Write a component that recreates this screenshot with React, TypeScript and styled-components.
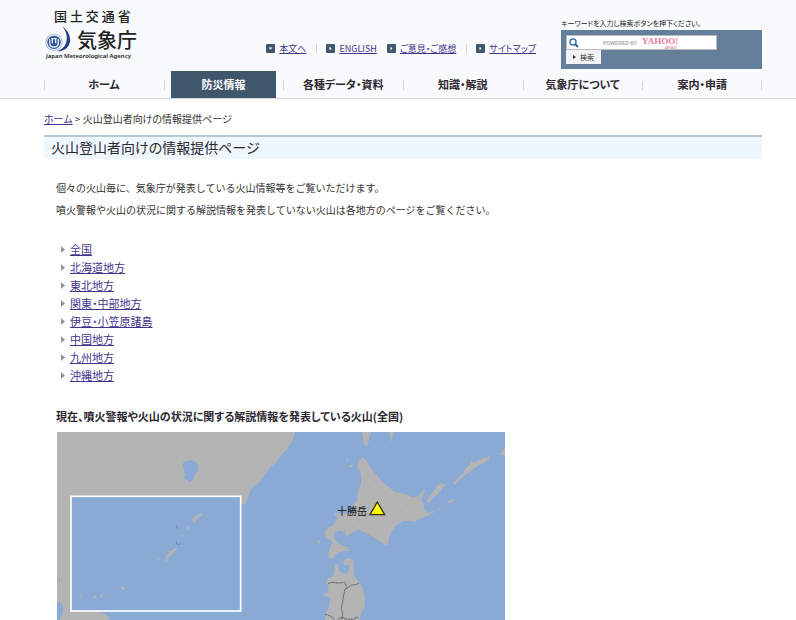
import React from "react";
import styled, { createGlobalStyle, css } from "styled-components";

const GlobalStyle = createGlobalStyle`
  body {
    margin: 0;
    background: #fff;
    color: #333;
    font-family: "Noto Sans CJK JP", "Liberation Sans", sans-serif;
    font-size: 11px;
    font-feature-settings: "palt";
  }
  * { box-sizing: border-box; }
  a { color: #43348c; }
`;

const Header = styled.header`
  background: #f8fafc;
  border-bottom: 1px solid #d6d8da;
  padding: 0 34px 0 44px;
`;

const TopRow = styled.div`
  display: flex;
  height: 71px;
`;

const Logo = styled.a`
  display: block;
  width: 96px;
  padding-top: 8px;
  color: #222;
  text-decoration: none;
`;

const Ministry = styled.div`
  padding-left: 10px;
  font-size: 13px;
  font-weight: 500;
  line-height: 16px;
  white-space: nowrap;
`;

const AgencyRow = styled.div`
  display: flex;
  align-items: flex-end;
  gap: 6px;
  height: 28px;
`;

const AgencyName = styled.div`
  font-size: 20px;
  font-weight: 500;
  line-height: 24px;
  white-space: nowrap;
`;

const AgencyEnglish = styled.div`
  padding-left: 2px;
  font-family: "Noto Sans", sans-serif;
  font-size: 6px;
  font-weight: 600;
  line-height: 8px;
  white-space: nowrap;
`;

const Links = styled.ul`
  display: flex;
  align-items: center;
  height: 16px;
  margin: 40px 25px 0 auto;
  padding: 0;
  list-style: none;
`;

const LinkItem = styled.li<{ $divided?: boolean }>`
  display: flex;
  align-items: center;
  gap: 4px;
  height: 9px;
  margin-left: 10px;
  font-size: 9px;
  white-space: nowrap;
  ${(p) =>
    p.$divided &&
    css`
      padding-left: 9px;
      border-left: 1px solid #d4d8dc;
    `}
`;

const Search = styled.form`
  width: 201px;
  padding-top: 16px;
`;

const SearchLabel = styled.label`
  display: block;
  font-size: 7px;
  line-height: 14px;
  color: #222;
  white-space: nowrap;
`;

const SearchBox = styled.div`
  height: 39px;
  padding: 5px;
  background: #637f99;
`;

const Field = styled.div`
  position: relative;
  width: 151px;
  height: 15px;
`;

const SearchInput = styled.input`
  display: block;
  width: 100%;
  height: 100%;
  padding: 0 4px;
  border: 1px solid #b4bcc4;
  background: #fff;
  font-size: 9px;
`;

const FieldArt = styled.svg`
  position: absolute;
  inset: 0;
  pointer-events: none;
`;

const SearchButton = styled.button`
  display: flex;
  align-items: center;
  justify-content: center;
  gap: 4px;
  width: 35px;
  height: 14px;
  padding: 0;
  border: 0;
  background: #f2f3f4;
  color: #333;
  font: inherit;
  font-size: 7px;
`;

const Nav = styled.nav`
  display: flex;
  height: 27px;
`;

const NavCell = styled.div<{ $last?: boolean }>`
  flex: 1;
  padding: 0 7px;
  background:
    linear-gradient(#d0d4d8, #d0d4d8) 0 10px / 1px 9px no-repeat
    ${(p) => p.$last && ", linear-gradient(#d0d4d8, #d0d4d8) 100% 10px / 1px 9px no-repeat"};
`;

const NavLink = styled.a<{ $active?: boolean }>`
  display: block;
  height: 27px;
  background: ${(p) => (p.$active ? "#40566b" : "transparent")};
  color: ${(p) => (p.$active ? "#fff" : "#2f2730")};
  font-size: 11px;
  font-weight: 700;
  line-height: 26px;
  text-align: center;
  text-decoration: none;
  white-space: nowrap;
`;

const Main = styled.main`
  padding: 12px 34px 0 44px;
`;

const Breadcrumb = styled.div`
  height: 24px;
  font-size: 10px;
  line-height: 16px;
`;

const Title = styled.h1`
  height: 24px;
  margin: 0;
  padding-left: 7px;
  border-top: 2px solid #bac6d0;
  background: #eef7fe;
  color: #2c2630;
  font-size: 14px;
  font-weight: 400;
  line-height: 20px;
`;

const Content = styled.section`
  padding: 18px 12px 0;
`;

const Paragraph = styled.p`
  margin: 0;
  font-size: 10px;
  font-feature-settings: normal;
  line-height: 22px;
`;

const Regions = styled.ul`
  margin: 19px 0 0;
  padding: 0 0 0 5px;
  list-style: none;
`;

const Region = styled.li`
  display: flex;
  align-items: center;
  gap: 5px;
  height: 18px;
  font-size: 11px;
`;

const RegionLink = styled.a`
  line-height: 18px;
`;

const MapHeading = styled.h2`
  margin: 23px 0 7px;
  color: #2c2630;
  font-size: 11px;
  font-weight: 700;
  line-height: 18px;
`;

const MapView = styled.svg`
  display: block;
  margin-left: 1px;
`;

const Emblem = () => (
  <svg width="27" height="27" viewBox="0 0 81 81" aria-hidden="true">
    <path d="M55 4C72 17 82 35 77 54C73 70 58 79 40 79C58 72 66 60 68 46C70 30 65 16 55 4Z" fill="#223f86" />
    <circle cx="30" cy="52" r="26" fill="#a9bdd9" />
    <circle cx="30" cy="52" r="23" fill="#eef3f9" />
    <circle cx="30" cy="52" r="20" fill="#2f5597" />
    <path d="M17 42V53Q17 66 30 66Q43 66 43 53V42M25 42V55M35 42V55M22 41H38" fill="none" stroke="#e9f0f8" strokeWidth="4" />
  </svg>
);

const SquareIcon = ({ down }: { down?: boolean }) => (
  <svg width="9" height="9" viewBox="0 0 9 9" aria-hidden="true">
    <rect width="9" height="9" rx="1" fill="#40566b" />
    <path d={down ? "M2.5 3.5H6.5L4.5 5.5Z" : "M3.5 2.5V6.5L5.5 4.5Z"} fill="#fff" />
  </svg>
);

const Bullet = () => (
  <svg width="4" height="7" viewBox="0 0 4 7" aria-hidden="true">
    <path d="M0 0L4 3.5L0 7Z" fill="#8b98a3" />
  </svg>
);

const topLinks = [
  { label: "本文へ", down: true },
  { label: "ENGLISH", divided: true },
  { label: "ご意見・ご感想" },
  { label: "サイトマップ", divided: true },
];

const navItems = ["ホーム", "防災情報", "各種データ・資料", "知識・解説", "気象庁について", "案内・申請"];

const regions = [
  "全国",
  "北海道地方",
  "東北地方",
  "関東・中部地方",
  "伊豆・小笠原諸島",
  "中国地方",
  "九州地方",
  "沖縄地方",
];

const VolcanoMap = () => (
  <MapView width="448" height="188" viewBox="57 432 448 188" role="img" aria-label="火山の地図">
    <rect x="57" y="432" width="448" height="188" fill="#88aad4" />
    <g transform="translate(50 425) scale(0.33333)" fill="#b4b4b4">
      <path d="M21 21H735L728 45L712 72L692 92L680 112L662 125L648 145L635 160L626 175L610 183L601 198L594 216L585 236L560 240V550L60 558L155 562L172 572L182 590H21L35 572L39 548L32 534L21 532Z" />
      <path d="M21 532L32 534L39 548L35 572L24 590H21Z" fill="#88aad4" />
      <path d="M400 112L412 107L425 106L438 111L445 124L442 138L434 148L431 162L418 172L412 164L402 162L406 148L399 125Z" fill="#88aad4" />
      <path d="M22 470L36 459" stroke="#96999f" strokeWidth="2" />
      <rect x="63" y="214" width="509" height="344" fill="#88aad4" stroke="#fff" strokeWidth="5" />
      <path d="M427 283L437 271L457 263L455 271L443 280L433 293L427 292ZM412 304L419 303V312L414 315ZM391 332L400 329L397 336ZM351 374L364 378L379 366L382 372L370 383L362 392L354 397L350 410L345 408L348 394L358 384ZM322 403L330 402L329 408ZM292 394L300 395L299 399ZM360 357L366 356L361 363ZM469 272L473 274L469 277ZM538 427L545 421L541 428ZM128 518L136 511L141 519L132 522ZM148 513L157 509L162 502L157 516L149 517ZM208 485L219 484L226 493L218 495ZM182 494L185 500ZM88 508H94V512H88Z" />
      <path d="M381 300V311M379 349V356Q384 360 392 356" fill="none" stroke="#557594" strokeWidth="2" />
    </g>
    <g transform="translate(280 425) scale(0.33333)" fill="#b4b4b4">
      <path d="M246 21H273L267 44L260 67L251 55ZM328 21H342L337 40L333 53Z" />
      <path d="M236 105L248 97L260 107L270 126L291 151L310 174L329 188L351 203L378 207L397 217L413 214L426 200L438 188L431 209L423 223L431 237L433 253L448 268L432 277L414 283L404 291L389 287L370 289L350 300L336 318L327 337L326 352L320 363L296 347L267 329L239 316L225 318L211 326L202 336L192 322L181 317L165 321L160 337L172 351L185 361L202 366L208 378L190 379L176 382L164 391L159 402L148 399L145 383L151 366L157 350L140 338L134 323L141 309L155 304L169 288L174 277L163 271V263L183 267L203 265L215 258L218 239L231 226L233 200L242 181L244 157L240 137L231 124Z" />
      <path d="M440 230L446 215L461 198L470 184L484 174L500 181L487 189L478 203L459 218L448 234ZM519 178L530 163L548 146L557 130L568 121L573 106L580 111L589 110L609 99L626 94L628 103L610 115L592 123L575 137L558 148L542 162L525 180ZM503 229L516 222L523 226L512 234L505 236ZM661 90L667 77L675 68V90ZM440 266L456 260L468 256L459 263L444 272ZM473 252L485 247L479 255ZM490 242L496 240L491 245Z" />
      <path d="M198 105L203 100L202 114ZM205 120L217 119L216 130L210 127ZM112 347L120 344L119 354L113 357Z" />
      <path d="M163 418L173 416L178 438L188 444L199 446L208 434L207 421L190 419L192 405L206 398L222 407L220 425L222 453L236 470L248 489L254 516L255 545L244 562L236 590H135L137 566L147 544L150 520L140 513L129 512L131 505L143 502L146 488L139 472L143 459L158 455L163 441Z" />
      <path d="M144 475L158 472L176 474L194 472L198 481L203 489L215 480L228 479L237 474M203 489L195 492L190 516L187 536L184 550L188 567L185 583M135 568L151 573L164 583M174 583L187 577L199 582L223 583L226 577H236" fill="none" stroke="#666" strokeWidth="3" strokeDasharray="7 1" />
      <path d="M263 184L268 187L265 191ZM379 238L384 239L381 244ZM193 314L199 319L193 321ZM215 305L221 306L217 309Z" fill="#88aad4" />
      <path d="M292 231L314 269H270Z" fill="#ffff00" stroke="#333300" strokeWidth="4" />
    </g>
    <text x="337" y="515" fontSize="10" fill="#111">十勝岳</text>
  </MapView>
);

export default function App() {
  return (
    <>
      <GlobalStyle />
      <Header>
        <TopRow>
          <Logo href="#">
            <Ministry>国 土 交 通 省</Ministry>
            <AgencyRow>
              <Emblem />
              <AgencyName>気象庁</AgencyName>
            </AgencyRow>
            <AgencyEnglish>Japan Meteorological Agency</AgencyEnglish>
          </Logo>
          <Links>
            {topLinks.map((l) => (
              <LinkItem key={l.label} $divided={l.divided}>
                <SquareIcon down={l.down} />
                <a href="#">{l.label}</a>
              </LinkItem>
            ))}
          </Links>
          <Search>
            <SearchLabel htmlFor="q">キーワードを入力し検索ボタンを押下ください。</SearchLabel>
            <SearchBox>
              <Field>
                <SearchInput id="q" type="text" />
                <FieldArt width="151" height="15" viewBox="0 0 151 15" aria-hidden="true">
                  <circle cx="7" cy="7" r="3" fill="none" stroke="#3b78b4" strokeWidth="1.5" />
                  <path d="M9 9L12 12" stroke="#2d6299" strokeWidth="2" />
                  <text x="37" y="10" fontFamily="Liberation Sans, sans-serif" fontSize="5" fontWeight="700" fill="#aaa">POWERED BY</text>
                  <text x="76" y="9" fontFamily="Liberation Serif, serif" fontSize="9" fontWeight="700" fill="#e6799a">YAHOO!</text>
                  <text x="98" y="14" fontFamily="Liberation Sans, sans-serif" fontSize="4" fill="#e6799a">JAPAN</text>
                </FieldArt>
              </Field>
              <SearchButton type="button">
                <svg width="3" height="4" viewBox="0 0 3 4" aria-hidden="true">
                  <path d="M0 0L3 2L0 4Z" fill="#333" />
                </svg>
                検索
              </SearchButton>
            </SearchBox>
          </Search>
        </TopRow>
        <Nav>
          {navItems.map((n, i) => (
            <NavCell key={n} $last={i === navItems.length - 1}>
              <NavLink href="#" $active={i === 1}>{n}</NavLink>
            </NavCell>
          ))}
        </Nav>
      </Header>
      <Main>
        <Breadcrumb>
          <a href="#">ホーム</a> &gt; 火山登山者向けの情報提供ページ
        </Breadcrumb>
        <Title>火山登山者向けの情報提供ページ</Title>
        <Content>
          <Paragraph>個々の火山毎に、気象庁が発表している火山情報等をご覧いただけます。</Paragraph>
          <Paragraph>噴火警報や火山の状況に関する解説情報を発表していない火山は各地方のページをご覧ください。</Paragraph>
          <Regions>
            {regions.map((r) => (
              <Region key={r}>
                <Bullet />
                <RegionLink href="#">{r}</RegionLink>
              </Region>
            ))}
          </Regions>
          <MapHeading>現在、噴火警報や火山の状況に関する解説情報を発表している火山(全国)</MapHeading>
          <VolcanoMap />
        </Content>
      </Main>
    </>
  );
}
